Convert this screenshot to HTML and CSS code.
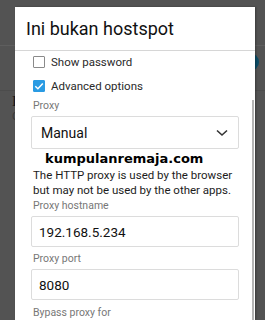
FILE: index.html
```html
<!DOCTYPE html>
<html>
<head>
    <title>Ini bukan hostspot</title>
    <link rel="stylesheet" href="styles.css">
</head>
<body>
    <!-- dimmed app behind the dialog -->
    <div class="app">
        <div class="app-bar"></div>
        <div class="app-row">
            <div class="app-title">I</div>
            <div class="app-sub">C</div>
        </div>
        <div class="fab"></div>
    </div>

    <div class="dialog">
        <div class="dialog-title">Ini bukan hostspot</div>
        <div class="dialog-body">
            <label class="check-row">
                <span class="box"></span>
                <span>Show password</span>
            </label>
            <label class="check-row">
                <span class="box checked">
                    <svg viewBox="0 0 12 12" width="12" height="12"><path d="M2.3 6.2 L4.9 8.7 L9.8 3.4" fill="none" stroke="#fff" stroke-width="1.5"/></svg>
                </span>
                <span>Advanced options</span>
            </label>

            <div class="field-label first">Proxy</div>
            <div class="select">
                <span>Manual</span>
                <svg viewBox="0 0 12 8" width="12" height="8"><path d="M1 1.5 L6 6 L11 1.5" fill="none" stroke="#333" stroke-width="1.6"/></svg>
            </div>
            <div class="watermark">kumpulanremaja.com</div>
            <p class="help">The HTTP proxy is used by the browser<br>but may not be used by the other apps.</p>

            <div class="field-label after-help">Proxy hostname</div>
            <div class="input">192.168.5.234</div>
            <div class="field-label">Proxy port</div>
            <div class="input">8080</div>
            <div class="field-label last">Bypass proxy for</div>
        </div>
        <div class="scrollbar"></div>
    </div>
</body>
</html>
```

FILE: styles.css
```css
body {
    margin: 0;
    width: 265px;
    height: 320px;
    overflow: hidden;
    background-color: #535353;
    font-family: Roboto, "Noto Sans", sans-serif;
    position: relative;
}
.app {
    height: 320px;
}
.app-bar {
    height: 45px;
    border-bottom: 1px solid #5e5e5e;
}
.app-row {
    margin-top: 44px;
    padding-left: 12px;
    height: 40px;
    border-top: 1px solid #4c4c4c;
}
.app-title {
    font-family: "Liberation Serif", serif;
    font-size: 14px;
    color: #151515;
    line-height: 16px;
    padding-top: 3px;
}
.app-sub {
    font-size: 11px;
    color: #383838;
    line-height: 14px;
}
.fab {
    position: absolute;
    left: 241px;
    top: 53px;
    width: 18px;
    height: 18px;
    border-radius: 50%;
    background-color: #0b4c66;
}
.dialog {
    position: absolute;
    left: 15px;
    top: 7px;
    width: 240px;
    bottom: 0;
    background-color: #fff;
    box-shadow: 1px 0 2px rgba(0,0,0,0.3);
    overflow: hidden;
}
.dialog-title {
    height: 43px;
    border-bottom: 1px solid #d6d6d6;
    padding-left: 11px;
    font-size: 18px;
    line-height: 44px;
    color: #111;
}
.dialog-body {
    padding: 4px 16px 0 16px;
}
.check-row {
    display: flex;
    align-items: center;
    gap: 6px;
    height: 13px;
    margin-bottom: 11px;
    padding-left: 2px;
    font-size: 11.5px;
    color: #2a2a2a;
}
.box {
    width: 10px;
    height: 10px;
    border: 1.5px solid #8a8a8a;
    border-radius: 1px;
    display: flex;
}
.box.checked {
    border-color: #2a9be3;
    background-color: #2a9be3;
}
.box svg {
    margin: -1px;
}
.field-label {
    font-size: 10.5px;
    color: #777;
    line-height: 12px;
    padding-left: 2px;
    margin-top: 6px;
}
.field-label.first {
    margin-top: -3px;
}
.field-label.after-help {
    margin-top: 2px;
}
.field-label.last {
    margin-top: 7px;
}
.select, .input {
    box-sizing: border-box;
    height: 31px;
    border: 1px solid #dcdcdc;
    border-radius: 2px;
    margin-top: 4px;
    display: flex;
    align-items: center;
    padding: 0 8px 0 7px;
    font-size: 13.5px;
    color: #111;
}
.select {
    height: 33px;
    justify-content: space-between;
    padding: 0 10px 0 9px;
    font-size: 14px;
}
.watermark {
    font-family: "DejaVu Sans", sans-serif;
    font-weight: bold;
    font-size: 13px;
    color: #000;
    padding-left: 14px;
    margin-top: 2px;
    line-height: 16px;
}
.help {
    margin: 1px -10px 0 2px;
    font-size: 11.5px;
    line-height: 15px;
    color: #1c1c1c;
    white-space: nowrap;
}
.scrollbar {
    position: absolute;
    right: 1px;
    top: 93px;
    bottom: 0;
    width: 2px;
    background-color: #b4b4b4;
}
```
